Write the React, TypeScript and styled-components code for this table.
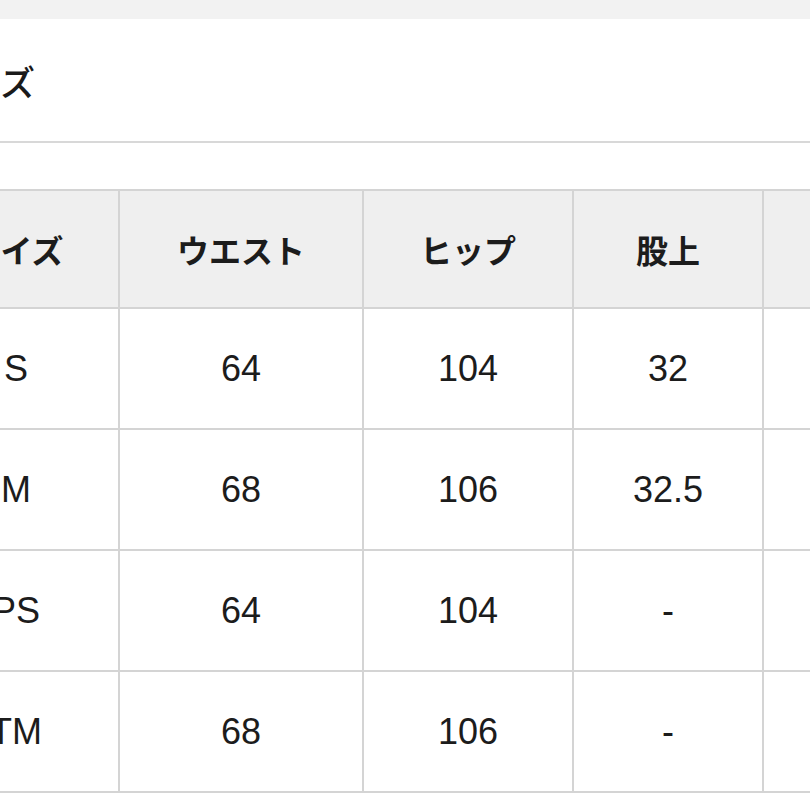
import React from 'react';
import styled, { createGlobalStyle } from 'styled-components';

type SizeRow = {
  size: string;
  waist: string;
  hip: string;
  rise: string;
  inseam: string;
};

const rows: SizeRow[] = [
  { size: 'S', waist: '64', hip: '104', rise: '32', inseam: '72' },
  { size: 'M', waist: '68', hip: '106', rise: '32.5', inseam: '73' },
  { size: 'PS', waist: '64', hip: '104', rise: '-', inseam: '67' },
  { size: 'TM', waist: '68', hip: '106', rise: '-', inseam: '68' },
];

const columns = [
  { label: 'サイズ', width: 206 },
  { label: 'ウエスト', width: 244 },
  { label: 'ヒップ', width: 210 },
  { label: '股上', width: 190 },
  { label: '股下', width: 220 },
];

const App: React.FC = () => {
  return (
    <>
      <GlobalStyle />
      <Page>
        <TopBand />
        <Content>
          <TitleBar>サイズ</TitleBar>
          <SizeTable>
            <colgroup>
              {columns.map((c) => (
                <col key={c.label} style={{ width: c.width }} />
              ))}
            </colgroup>
            <thead>
              <tr>
                {columns.map((c) => (
                  <HeadCell key={c.label}>{c.label}</HeadCell>
                ))}
              </tr>
            </thead>
            <tbody>
              {rows.map((r) => (
                <tr key={r.size}>
                  <Cell>{r.size}</Cell>
                  <Cell>{r.waist}</Cell>
                  <Cell>{r.hip}</Cell>
                  <Cell>{r.rise}</Cell>
                  <Cell>{r.inseam}</Cell>
                </tr>
              ))}
            </tbody>
          </SizeTable>
        </Content>
      </Page>
    </>
  );
};

export default App;

// styles

const GlobalStyle = createGlobalStyle`
  html, body {
    margin: 0;
    padding: 0;
    background: #ffffff;
    overflow: hidden;
  }
  body {
    font-family: "Liberation Sans", "Noto Sans CJK JP", sans-serif;
    color: #1c1c1c;
  }
`;

const Page = styled.div`
  width: 810px;
  height: 810px;
  overflow: hidden;
  background: #ffffff;
`;

const TopBand = styled.div`
  height: 19px;
  background: #f2f2f2;
`;

const Content = styled.div`
  margin-left: -88px;
  width: 1100px;
`;

const TitleBar = styled.div`
  height: 122px;
  display: flex;
  align-items: center;
  padding-left: 19px;
  border-bottom: 2px solid #d8d8d8;
  font-family: "Noto Sans CJK JP", sans-serif;
  font-size: 35px;
  font-weight: 500;
  color: #1a1a1a;
`;

const SizeTable = styled.table`
  margin-top: 46px;
  border-collapse: collapse;
  table-layout: fixed;
  width: 1070px;
`;

const HeadCell = styled.th`
  height: 116px;
  padding: 0;
  background: #efefef;
  border: 2px solid #d4d4d4;
  font-family: "Noto Sans CJK JP", sans-serif;
  font-size: 32px;
  font-weight: 700;
  color: #1c1c1c;
  text-align: center;
  vertical-align: middle;
`;

const Cell = styled.td`
  height: 119px;
  padding: 0;
  border: 2px solid #d4d4d4;
  font-size: 36px;
  color: #1c1c1c;
  text-align: center;
  vertical-align: middle;
`;
